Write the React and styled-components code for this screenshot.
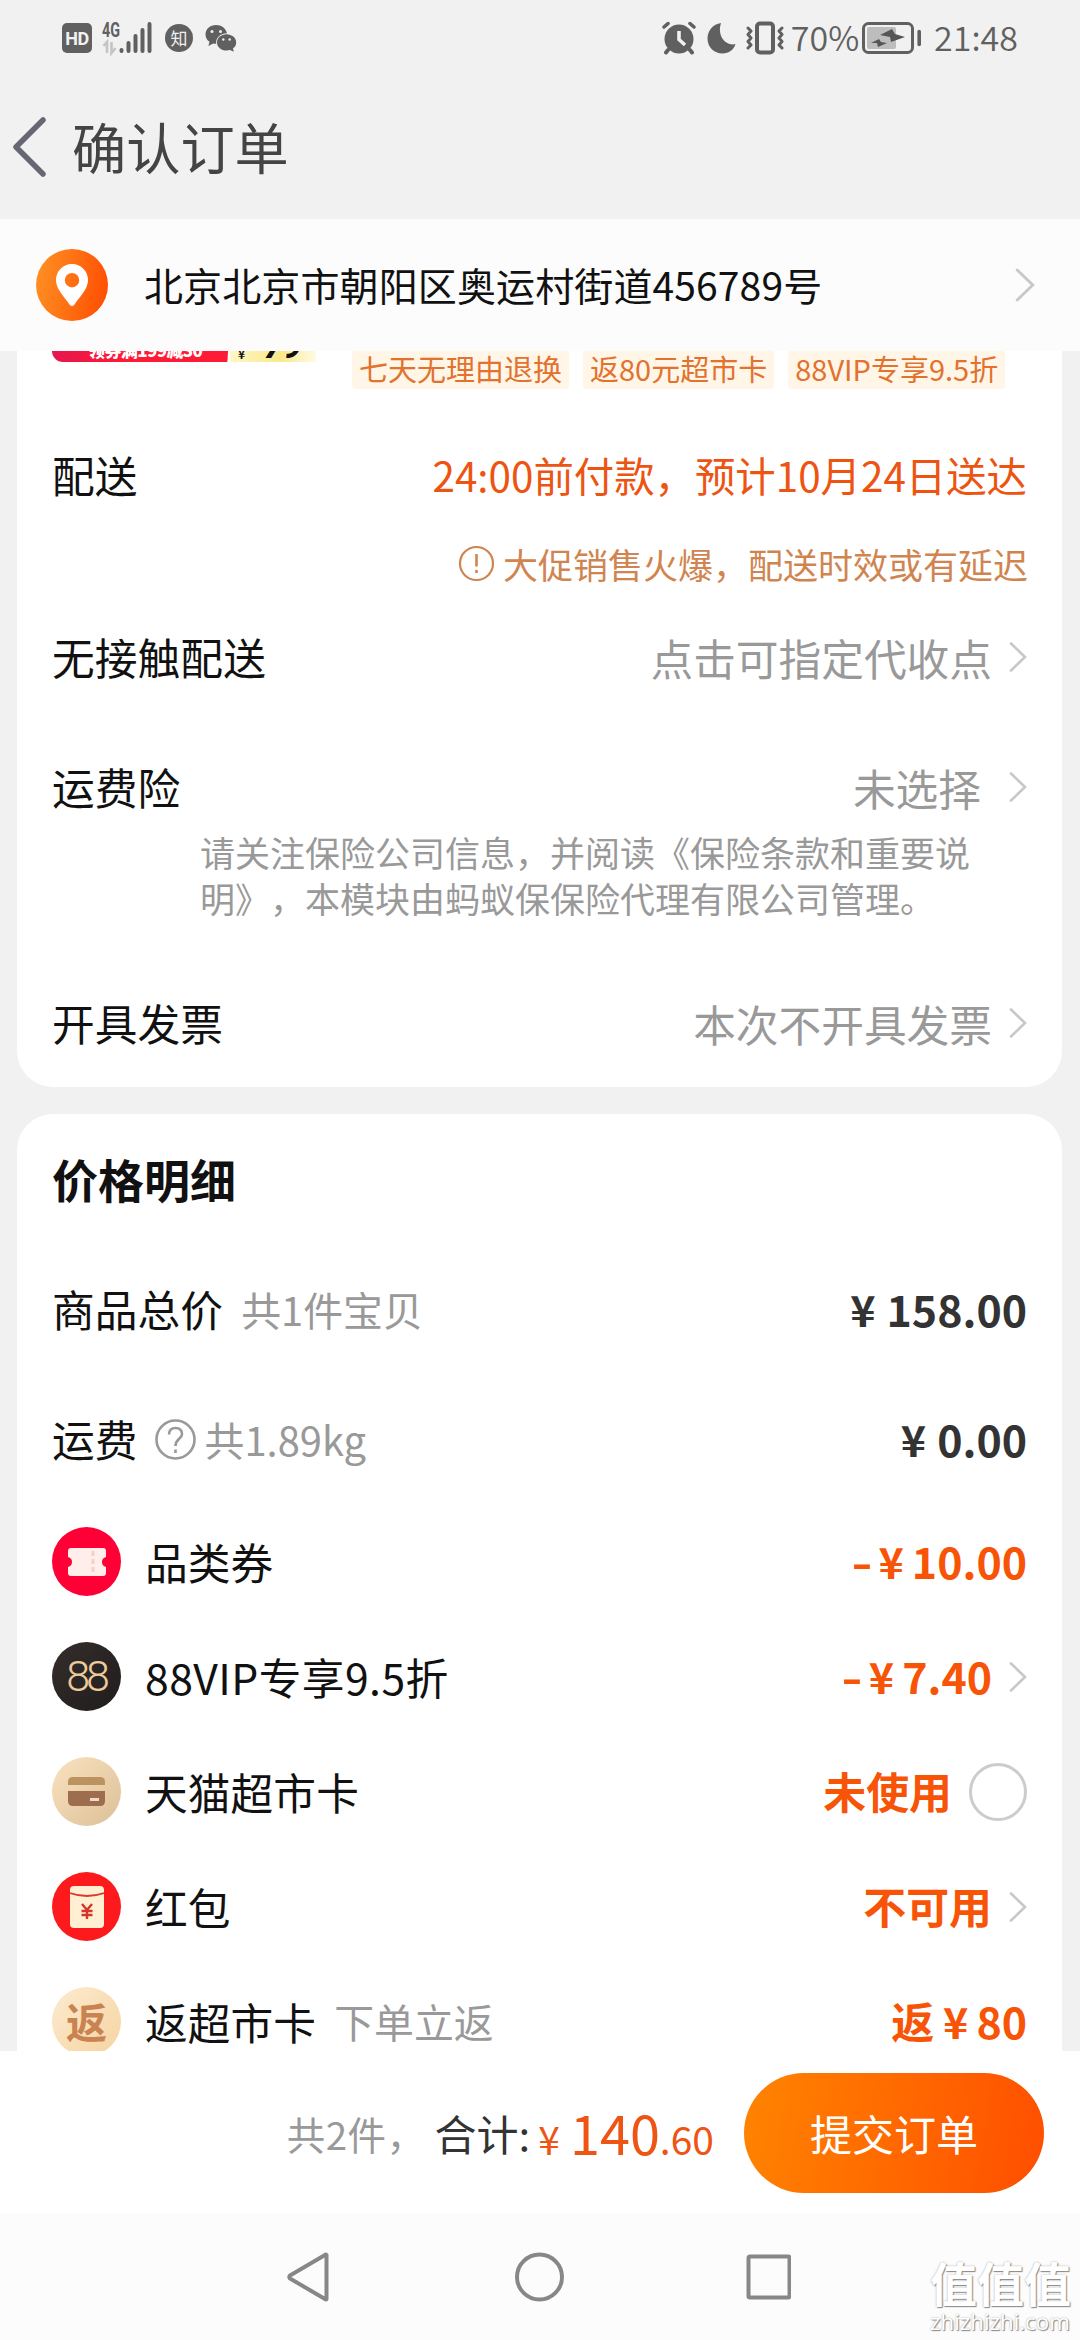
import styled, { createGlobalStyle } from "styled-components";

const priceRows = [
    { icon: "coupon", name: "品类券", minus: true, price: "10.00" },
    { icon: "vip", name: "88VIP专享9.5折", spacing: 0.45, minus: true, price: "7.40", end: "arrow" },
    { icon: "card", name: "天猫超市卡", text: "未使用", end: "radio" },
    { icon: "packet", name: "红包", text: "不可用", end: "arrow" },
    { icon: "back", name: "返超市卡", hint: "下单立返", text: "返", price: "80" },
];

const endGap = { arrow: 17, radio: 17 };

function Arrow({ big }) {
    return (
        <ArrowIcon $big={big} viewBox="0 0 18 30">
            <path d="M2 1.5 L16 15 L2 28.5" />
        </ArrowIcon>
    );
}

function StatusBar() {
    return (
        <Status>
            <StatusSide>
                <HdBadge>HD</HdBadge>
                <svg className="signal" width="52" height="36" viewBox="0 0 52 36">
                    <text x="0" y="17" fontSize="20" fontWeight="700" textLength="18" lengthAdjust="spacingAndGlyphs">4G</text>
                    <path d="M5 33V22L1.5 26M9.5 22V33L13.5 28" fill="none" stroke="#c4c4c4" strokeWidth="2.6" />
                    <g stroke="#606060" strokeWidth="4" strokeLinecap="round">
                        <path d="M19.5 30V31M26.5 23V31M33.5 16V31M40.5 10V31M47.5 4V31" />
                    </g>
                </svg>
                <Zhi>知</Zhi>
                <svg className="wechat" width="32" height="28" viewBox="0 0 32 28">
                    <path d="M11 1C5 1 .5 5 .5 10.4c0 3 1.6 5.6 4 7.4L3.4 22l4.8-2.6c1 .2 2 .3 3 .3C10.5 14 15 9.3 22 9.2 21 4.5 16.5 1 11 1z" fill="#606060" />
                    <path d="M21.5 10.2c-5.3 0-9.5 3.6-9.5 8.2s4.2 8.2 9.5 8.2c1.2 0 2.400-.2 3.400-.5l4 1.700-1-3.300c2.200-1.500 3.300-3.700 3.300-6.100 0-4.600-4.400-8.200-9.700-8.200z" fill="#606060" />
                    <g fill="#f1f1f1">
                        <circle cx="7" cy="7.6" r="1.5" />
                        <circle cx="15.5" cy="7.6" r="1.5" />
                        <circle cx="18.3" cy="15.5" r="1.2" />
                        <circle cx="24.7" cy="15.5" r="1.2" />
                    </g>
                </svg>
            </StatusSide>
            <StatusSide>
                <svg width="34" height="34" viewBox="0 0 34 34">
                    <circle cx="17" cy="18" r="14.5" fill="#606060" />
                    <path d="M6 29L4 31.5M28 29L30 31.5" stroke="#606060" strokeWidth="4" strokeLinecap="round" />
                    <path d="M2 6L6 2.5M32 6L28 2.5" stroke="#606060" strokeWidth="3.5" strokeLinecap="round" />
                    <path d="M17 10V18.5L23 24" fill="none" stroke="#f1f1f1" strokeWidth="3.6" />
                </svg>
                <svg className="moon" width="29" height="32" viewBox="0 0 29 32">
                    <path d="M14 1C6 2 .5 9 .5 16.5 .5 25 7 31.5 15.5 31.5c6.5 0 11.5-4 13-9.5C20 24.5 9.5 15 14 1z" fill="#606060" />
                </svg>
                <svg className="vibrate" width="38" height="34" viewBox="0 0 38 34">
                    <rect x="11" y="2.5" width="16" height="29" rx="3" fill="none" stroke="#606060" strokeWidth="4" />
                    <path d="M2 7l3 3-3 3.5 3 3.5-3 3.5 3 3.5-3 3M36 7l-3 3 3 3.5-3 3.5 3 3.5-3 3.5 3 3" fill="none" stroke="#606060" strokeWidth="3" strokeLinejoin="round" strokeLinecap="round" />
                </svg>
                <StatusText $width={64}>70%</StatusText>
                <svg className="battery" width="60" height="34" viewBox="0 0 60 34">
                    <rect x="1.5" y="2.5" width="49" height="29" rx="5" fill="none" stroke="#606060" strokeWidth="3" />
                    <rect x="5" y="6" width="29" height="22" rx="2" fill="#bdbdbd" />
                    <path d="M18 14L30 8 33 13 43 16 29 21 28 16zM9 22L17 18 19 21 25 22 16 26 15 22z" fill="#555" />
                    <path d="M57.2 10.5V23.5" stroke="#606060" strokeWidth="3.6" strokeLinecap="round" />
                </svg>
                <StatusText $width={84}>21:48</StatusText>
            </StatusSide>
        </Status>
    );
}

function RowIcon({ type }) {
    if (type === "coupon") {
        return (
            <Round $bg="#ff0036">
                <svg width="38" height="28" viewBox="0 0 38 28">
                    <path d="M3 0H35Q38 0 38 3V9Q34 10 34 14T38 19V25Q38 28 35 28H3Q0 28 0 25V19Q4 18 4 14T0 9V3Q0 0 3 0z" fill="#ffeeea" />
                    <path d="M25 3V26" stroke="#f5cfc9" strokeWidth="3" strokeDasharray="5 3" />
                </svg>
            </Round>
        );
    }
    if (type === "vip") {
        return <Round $bg="linear-gradient(135deg, #352d2c, #1f1d1c)"><Eights>88</Eights></Round>;
    }
    if (type === "card") {
        return (
            <Round $bg="linear-gradient(135deg, #fae3c0, #dcbf97)">
                <svg width="38" height="30" viewBox="0 0 38 30">
                    <path d="M0 8V5Q0 0 5 0H32Q37 0 37 5V8z" fill="#ba935f" />
                    <path d="M0 14H37V24Q37 29 32 29H5Q0 29 0 24z" fill="#9d6d50" />
                    <path d="M22 22.5H31" stroke="#f3d9c2" strokeWidth="3" />
                </svg>
            </Round>
        );
    }
    if (type === "packet") {
        return (
            <Round $bg="#fd1a1d">
                <svg width="34" height="42" viewBox="0 0 34 42">
                    <rect width="34" height="42" rx="4" fill="#fff0d3" />
                    <path d="M0 7Q17 13 34 7" fill="none" stroke="#d93a2c" strokeWidth="1.8" />
                    <path d="M12 18L17 24 22 18M17 24V33M11.5 25H22.5M11.5 29H22.5" fill="none" stroke="#d33528" strokeWidth="2.4" />
                </svg>
            </Round>
        );
    }
    return <Round $bg="linear-gradient(135deg, #fcebd0, #f6d3a0)"><Fan>返</Fan></Round>;
}

export default function App() {
    return (
        <Page>
            <GlobalStyle />
            <StatusBar />
            <Header>
                <svg width="34" height="60" viewBox="0 0 34 60">
                    <path d="M31 3L4 30 31 57" fill="none" stroke="#666772" strokeWidth="5.5" strokeLinecap="round" strokeLinejoin="round" />
                </svg>
                <h1>确认订单</h1>
            </Header>
            <Address>
                <Pin>
                    <svg width="32" height="42" viewBox="0 0 32 42">
                        <path fillRule="evenodd" d="M16 0C7 0 0 7 0 16c0 9 7 15 13.5 24.5q2.5 3 5 0C25 31 32 25 32 16 32 7 25 0 16 0zM16 9a7.2 7.2 0 1 1 0 14.4A7.2 7.2 0 0 1 16 9z" fill="#fff" />
                    </svg>
                </Pin>
                <p>北京北京市朝阳区奥运村街道456789号</p>
                <Arrow big />
            </Address>

            <Scroll>
                <OrderCard>
                    <Goods>
                        <Promo>
                            <PromoRed>领券满199减30</PromoRed>
                            <PromoYellow><small>¥</small><b>79</b></PromoYellow>
                        </Promo>
                        <Tag>七天无理由退换</Tag>
                        <Tag>返80元超市卡</Tag>
                        <Tag>88VIP专享9.5折</Tag>
                    </Goods>
                    <Row $height={86}>
                        <Label>配送</Label>
                        <Delivery>24:00前付款，预计10月24日送达</Delivery>
                    </Row>
                    <Notice>
                        <svg width="37" height="37" viewBox="0 0 37 37">
                            <circle cx="18.5" cy="18.5" r="16.5" fill="none" stroke="#d08550" strokeWidth="2.2" />
                            <path d="M18.5 9V21.5M18.5 25V28" stroke="#d08550" strokeWidth="2.6" />
                        </svg>
                        大促销售火爆，配送时效或有延迟
                    </Notice>
                    <Row $height={98}>
                        <Label>无接触配送</Label>
                        <Value>点击可指定代收点</Value>
                        <Arrow />
                    </Row>
                    <Row $height={86} $top={38}>
                        <Label>运费险</Label>
                        <Value $gap={28}>未选择</Value>
                        <Arrow />
                    </Row>
                    <Note>请关注保险公司信息，并阅读《保险条款和重要说明》，本模块由蚂蚁保保险代理有限公司管理。</Note>
                    <Row $height={86} $top={59}>
                        <Label>开具发票</Label>
                        <Value>本次不开具发票</Value>
                        <Arrow />
                    </Row>
                </OrderCard>

                <PriceCard>
                    <h2>价格明细</h2>
                    <Row $height={130}>
                        <Label>商品总价</Label>
                        <Hint $left={18}>共1件宝贝</Hint>
                        <Amount><Yen $gap={11}>¥</Yen>158.00</Amount>
                    </Row>
                    <Row $height={130}>
                        <Label>运费</Label>
                        <Help width="41" height="41" viewBox="0 0 41 41">
                            <circle cx="20.5" cy="20.5" r="19" />
                            <path d="M14 15.5Q14 9 20.5 9T27 15.2C27 19.5 20.5 20 20.5 27M20.5 30.5V34" />
                        </Help>
                        <Hint $left={9}>共1.89kg</Hint>
                        <Amount><Yen $gap={11}>¥</Yen>0.00</Amount>
                    </Row>
                    {priceRows.map((row) => (
                        <Row key={row.name} $height={115}>
                            <RowIcon type={row.icon} />
                            <Label $spacing={row.spacing}>{row.name}</Label>
                            {row.hint && <Hint $left={18}>{row.hint}</Hint>}
                            <Amount $orange $gap={endGap[row.end]}>
                                {row.minus && <Minus>-</Minus>}
                                {row.text}
                                {row.price && <Yen $gap={8}>¥</Yen>}
                                {row.price}
                            </Amount>
                            {row.end === "arrow" && <Arrow />}
                            {row.end === "radio" && <Radio />}
                        </Row>
                    ))}
                </PriceCard>
            </Scroll>

            <Footer>
                <Count>共2件，</Count>
                <Total>合计:</Total>
                <Sum><small className="yen">¥</small>140<small>.60</small></Sum>
                <Submit>提交订单</Submit>
            </Footer>
            <NavBar>
                <svg width="504" height="50" viewBox="0 0 504 50" fill="none" stroke="#878787" strokeWidth="4" strokeLinejoin="round">
                    <path d="M39.5 3V47Q39 48 38 47L3 26.5Q1.5 25 3 23.5L38 3Q39 2 39.5 3z" />
                    <circle cx="252.5" cy="25" r="22.5" />
                    <rect x="461.5" y="4.5" width="41" height="41" rx="1.5" />
                </svg>
                <Watermark>
                    <b>值值值</b>
                    <span>zhizhizhi.com</span>
                </Watermark>
            </NavBar>
        </Page>
    );
}

const GlobalStyle = createGlobalStyle`
    * {
        box-sizing: border-box;
    }

    body {
        margin: 0;
        background: #f1f1f1;
        font-family: "Noto Sans CJK SC", "Noto Sans", sans-serif;
        text-spacing-trim: space-all;
        color: #111;
    }

    h1, h2, p {
        margin: 0;
    }

    svg {
        display: block;
        flex: none;
    }
`;

const Page = styled.div`
    width: 1080px;
    height: 2340px;
    display: flex;
    flex-direction: column;
    overflow: hidden;
    background: #f1f1f1;
    white-space: nowrap;
`;

const Status = styled.div`
    height: 76px;
    padding: 0 62px;
    display: flex;
    align-items: center;
    justify-content: space-between;
    color: #606060;
`;

const StatusSide = styled.div`
    display: flex;
    align-items: center;

    text {
        fill: #606060;
        font-family: Roboto, sans-serif;
    }

    .signal {
        margin-left: 10px;
        margin-right: 11px;
    }

    .wechat {
        margin-left: 12px;
    }

    .moon {
        margin-left: 11px;
    }

    .vibrate {
        margin-left: 10px;
        margin-right: 9px;
    }

    .battery {
        margin-left: 5px;
        margin-right: 12px;
    }
`;

const HdBadge = styled.div`
    width: 30px;
    height: 30px;
    border-radius: 5px;
    background: #606060;
    color: #f1f1f1;
    font: 700 18px/32px Roboto, sans-serif;
    letter-spacing: -0.5px;
    text-align: center;
`;

const Zhi = styled.div`
    width: 28px;
    height: 28px;
    border-radius: 50%;
    background: #606060;
    color: #f1f1f1;
    font-size: 17px;
    line-height: 27px;
    text-align: center;
`;

const StatusText = styled.div`
    width: ${(props) => props.$width}px;
    padding-bottom: 3px;
    display: flex;
    justify-content: center;
    font-size: 34px;
    font-weight: 350;
    line-height: 40px;
`;

const Header = styled.header`
    height: 143px;
    padding: 0 0 1px 12px;
    display: flex;
    align-items: center;

    h1 {
        margin-left: 26px;
        padding-bottom: 3px;
        font-size: 54.2px;
        font-weight: 400;
        line-height: 60px;
        color: #444;
    }
`;

const Address = styled.section`
    height: 132px;
    padding: 0 45px 0 36px;
    display: flex;
    align-items: center;
    background: #fcfcfc;

    p {
        flex: 1;
        margin-left: 36px;
        padding-bottom: 3px;
        font-size: 39px;
        line-height: 48px;
        letter-spacing: 0.12px;
    }
`;

const Pin = styled.div`
    width: 72px;
    height: 72px;
    border-radius: 50%;
    display: flex;
    align-items: center;
    justify-content: center;
    background: linear-gradient(100deg, #ff9325, #ff4a00);
`;

const ArrowIcon = styled.svg`
    width: ${(props) => (props.$big ? 20 : 18)}px;
    height: ${(props) => (props.$big ? 34 : 30)}px;

    path {
        fill: none;
        stroke: #c8c8c8;
        stroke-width: 2.6;
        stroke-linecap: round;
    }
`;

const Scroll = styled.main`
    height: 1700px;
    overflow: hidden;
    padding: 0 18px 0 17px;
`;

const OrderCard = styled.section`
    height: 736px;
    padding: 0 35px;
    border-radius: 0 0 36px 36px;
    background: #fff;
`;

const Goods = styled.div`
    height: 83px;
    display: flex;
    align-items: flex-start;
    gap: 14px;
`;

const Promo = styled.div`
    width: 264px;
    height: 11px;
    margin-right: 22px;
    display: flex;
    align-items: flex-end;
    overflow: hidden;
    border-radius: 0 0 0 14px;
`;

const PromoRed = styled.div`
    width: 178px;
    height: 40px;
    padding-left: 36px;
    background: linear-gradient(90deg, #e5174f, #ff1a35 40%);
    color: #fff;
    font-size: 17px;
    font-weight: 900;
    line-height: 56px;
    letter-spacing: -0.6px;
    clip-path: polygon(0 0, 100% 0, 98.5% 100%, 0 100%);
`;

const PromoYellow = styled.div`
    width: 86px;
    height: 40px;
    padding-left: 8px;
    display: flex;
    gap: 19px;
    background: linear-gradient(90deg, #fff6c4, #f9e88c 60%, #fffbe6);

    small {
        font-size: 12px;
        font-weight: 700;
        line-height: 64px;
    }

    b {
        font: italic 900 32px/50px Roboto, sans-serif;
        letter-spacing: 1px;
    }
`;

const Tag = styled.div`
    height: 38px;
    padding: 0 7px;
    border-radius: 0 0 4px 4px;
    background: #fff6e8;
    color: #e2722e;
    font-size: 29px;
    line-height: 34px;
`;

const Row = styled.div`
    height: ${(props) => props.$height}px;
    margin-top: ${(props) => props.$top || 0}px;
    padding-bottom: 4px;
    display: flex;
    align-items: center;
`;

const Label = styled.div`
    padding-bottom: 2px;
    font-size: 42.7px;
    line-height: 50px;
    letter-spacing: ${(props) => props.$spacing || 0.1}px;
`;

const Value = styled.div`
    margin-left: auto;
    margin-right: ${(props) => props.$gap || 17}px;
    padding-bottom: 1px;
    font-size: 42.7px;
    line-height: 50px;
    color: #999;
`;

const Delivery = styled.div`
    margin-left: auto;
    font-size: 40.4px;
    line-height: 50px;
    color: #ed5412;
`;

const Notice = styled.div`
    height: 90px;
    margin-right: -1px;
    padding-bottom: 4px;
    display: flex;
    align-items: center;
    justify-content: flex-end;
    gap: 8px;
    font-size: 35px;
    color: #d08550;
`;

const Note = styled.p`
    width: 780px;
    margin: -3px 0 0 148px;
    padding-bottom: 2px;
    font-size: 35px;
    line-height: 46px;
    color: #999;
    white-space: normal;
`;

const PriceCard = styled.section`
    height: 1000px;
    margin-top: 27px;
    padding: 24px 35px 0;
    border-radius: 36px;
    background: #fff;

    h2 {
        height: 108px;
        font-size: 46px;
        font-weight: 700;
        line-height: 80px;
    }
`;

const Hint = styled.div`
    margin-left: ${(props) => props.$left}px;
    padding-bottom: 1px;
    font-size: 39.9px;
    line-height: 50px;
    color: #999;
`;

const Help = styled.svg`
    margin-left: 17px;

    circle, path {
        fill: none;
        stroke: #999;
        stroke-width: 2.6;
    }
`;

const Amount = styled.div`
    margin-left: auto;
    margin-right: ${(props) => props.$gap || 0}px;
    padding-bottom: 3px;
    display: flex;
    font-size: 42.9px;
    font-weight: 700;
    line-height: 50px;
    color: ${(props) => (props.$orange ? "#f85408" : "#333")};
`;

const Yen = styled.span`
    margin-left: 9px;
    margin-right: ${(props) => props.$gap}px;
`;

const Minus = styled.span`
    transform: scaleX(1.35);
`;

const Radio = styled.div`
    width: 58px;
    height: 58px;
    border: 3px solid #ccc;
    border-radius: 50%;
`;

const Round = styled.div`
    width: 69px;
    height: 69px;
    margin-right: 24px;
    border-radius: 50%;
    display: flex;
    align-items: center;
    justify-content: center;
    background: ${(props) => props.$bg};
`;

const Eights = styled.span`
    margin-right: 1px;
    color: #ecca9c;
    font: 300 43px/43px Roboto, sans-serif;
    letter-spacing: -4px;
`;

const Fan = styled.span`
    padding-bottom: 4px;
    color: #c98350;
    font-size: 41px;
    font-weight: 700;
    line-height: 60px;
`;

const Footer = styled.footer`
    height: 163px;
    padding-right: 36px;
    display: flex;
    align-items: center;
    justify-content: flex-end;
    background: #fff;
`;

const Count = styled.div`
    margin-right: 9px;
    font-size: 38.5px;
    letter-spacing: 0.5px;
    color: #999;
`;

const Total = styled.div`
    margin-right: 8px;
    font-size: 42px;
    color: #333;
`;

const Sum = styled.div`
    margin-right: 30px;
    padding-top: 4px;
    font-size: 54px;
    line-height: 60px;
    color: #ee5414;

    small {
        font-size: 39px;
    }

    .yen {
        margin-right: 10px;
    }
`;

const Submit = styled.button`
    width: 300px;
    height: 120px;
    padding: 0;
    border: 0;
    border-radius: 60px;
    background: linear-gradient(100deg, #ff8400, #ff4e00);
    color: #fff;
    font-family: inherit;
    font-size: 42px;
`;

const NavBar = styled.nav`
    flex: 1;
    position: relative;
    padding: 38px 0 0 287px;
    background: #fcfcfc;
`;

const Watermark = styled.div`
    position: absolute;
    right: 8px;
    bottom: 5px;
    width: 142px;
    display: flex;
    flex-direction: column;
    color: #fff;
    text-shadow: 1px 1px 1px #888, 0 0 2px #aaa;

    b {
        font-size: 47px;
        line-height: 54px;
    }

    span {
        font: 400 22.3px/26px "Open Sans", sans-serif;
    }
`;
